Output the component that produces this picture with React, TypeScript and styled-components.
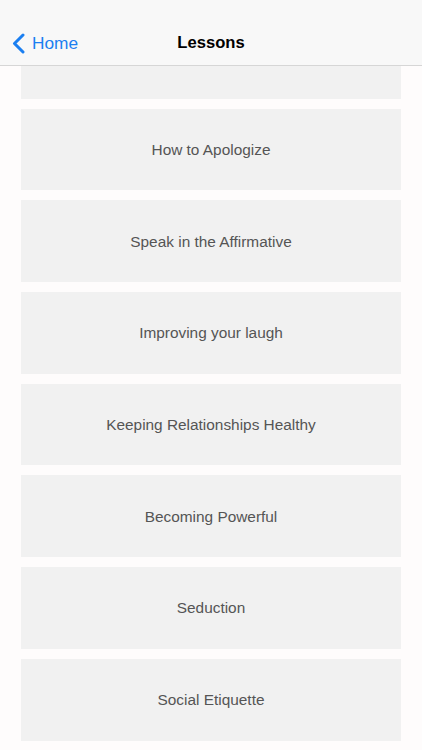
import styled, { createGlobalStyle } from "styled-components";

const GlobalStyle = createGlobalStyle`
  html, body {
    margin: 0;
    padding: 0;
    background: #fefcfc;
  }
  body {
    font-family: "Liberation Sans", "Noto Sans", Arial, sans-serif;
  }
`;

const Screen = styled.div`
  width: 422px;
  height: 750px;
  display: flex;
  flex-direction: column;
  overflow: hidden;
  background: #fefcfc;
`;

const NavBar = styled.header`
  flex: none;
  height: 66px;
  box-sizing: border-box;
  background: #f8f8f8;
  border-bottom: 1px solid #d6d6d6;
  display: grid;
  grid-template-columns: 1fr auto 1fr;
  align-items: end;
  padding: 0 0 11px;
  position: relative;
  z-index: 1;
`;

const BackButton = styled.button`
  justify-self: start;
  display: flex;
  align-items: center;
  gap: 7px;
  border: 0;
  background: none;
  padding: 0 0 0 12px;
  color: #1b7ff1;
  font-family: inherit;
  font-size: 17.3px;
  cursor: pointer;
`;

const Title = styled.h1`
  margin: 0;
  font-size: 16.6px;
  font-weight: 700;
  color: #000;
  line-height: 22px;
`;

const Scroller = styled.main`
  flex: 1;
  overflow: hidden;
`;

const List = styled.ul`
  list-style: none;
  margin: -49px 0 0;
  padding: 0 21px;
  display: flex;
  flex-direction: column;
  gap: 10px;
`;

const LessonCard = styled.li`
  height: 81.7px;
  background: #f1f1f1;
  display: flex;
  align-items: center;
  justify-content: center;
  color: #555;
  font-size: 15.4px;
  padding-top: 1px;
  box-sizing: border-box;
`;

const lessons = [
  "",
  "How to Apologize",
  "Speak in the Affirmative",
  "Improving your laugh",
  "Keeping Relationships Healthy",
  "Becoming Powerful",
  "Seduction",
  "Social Etiquette",
];

export default function App() {
  return (
    <>
      <GlobalStyle />
      <Screen>
        <NavBar>
          <BackButton>
            <svg width="13" height="21" viewBox="0 0 13 21" fill="none">
              <path
                d="M11 2 L2.5 10.5 L11 19"
                stroke="#1b7ff1"
                strokeWidth="3"
                strokeLinecap="round"
                strokeLinejoin="round"
              />
            </svg>
            Home
          </BackButton>
          <Title>Lessons</Title>
          <div />
        </NavBar>
        <Scroller>
          <List>
            {lessons.map((title, i) => (
              <LessonCard key={i}>{title}</LessonCard>
            ))}
          </List>
        </Scroller>
      </Screen>
    </>
  );
}
